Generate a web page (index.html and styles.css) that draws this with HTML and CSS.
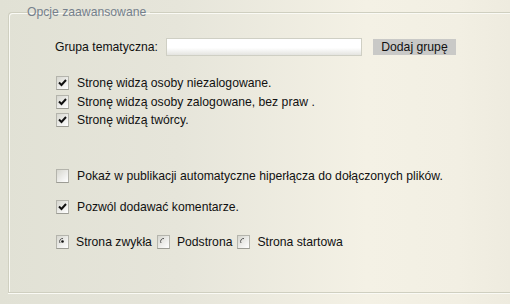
FILE: index.html
```html
<!DOCTYPE html>
<html lang="pl">
<head>
    <meta charset="UTF-8">
    <title>Opcje zaawansowane</title>
    <link rel="stylesheet" href="styles.css">
</head>
<body>

<fieldset class="opcje">
    <legend>Opcje zaawansowane</legend>

    <div class="grupa">
        <label for="grupa">Grupa tematyczna:</label>
        <input type="text" id="grupa" class="pole">
        <button type="button" class="przycisk">Dodaj grupę</button>
    </div>

    <div class="lista">
        <div class="wiersz">
            <span class="box"><svg width="9" height="8" viewBox="0 0 9 8"><path d="M1 3.5 L3.5 6 L8 1" fill="none" stroke="#111" stroke-width="2"/></svg></span>
            <span>Stronę widzą osoby niezalogowane.</span>
        </div>
        <div class="wiersz">
            <span class="box"><svg width="9" height="8" viewBox="0 0 9 8"><path d="M1 3.5 L3.5 6 L8 1" fill="none" stroke="#111" stroke-width="2"/></svg></span>
            <span>Stronę widzą osoby zalogowane, bez praw .</span>
        </div>
        <div class="wiersz">
            <span class="box"><svg width="9" height="8" viewBox="0 0 9 8"><path d="M1 3.5 L3.5 6 L8 1" fill="none" stroke="#111" stroke-width="2"/></svg></span>
            <span>Stronę widzą twórcy.</span>
        </div>
    </div>

    <div class="wiersz odstep">
        <span class="box"></span>
        <span>Pokaż w publikacji automatyczne hiperłącza do dołączonych plików.</span>
    </div>

    <div class="wiersz odstep2">
        <span class="box"><svg width="9" height="8" viewBox="0 0 9 8"><path d="M1 3.5 L3.5 6 L8 1" fill="none" stroke="#111" stroke-width="2"/></svg></span>
        <span>Pozwól dodawać komentarze.</span>
    </div>

    <div class="wiersz radia">
        <span class="box"><svg width="9" height="9" viewBox="0 0 9 9"><path d="M5 1.5 A3 3 0 0 0 2 6" fill="none" stroke="#555" stroke-width="1"/><circle cx="4.5" cy="4.5" r="1.3" fill="#111"/></svg></span>
        <span class="opis">Strona zwykła</span>
        <span class="box"><svg width="9" height="9" viewBox="0 0 9 9"><path d="M5 1.5 A3 3 0 0 0 2 6" fill="none" stroke="#555" stroke-width="1"/></svg></span>
        <span class="opis">Podstrona</span>
        <span class="box"><svg width="9" height="9" viewBox="0 0 9 9"><path d="M5 1.5 A3 3 0 0 0 2 6" fill="none" stroke="#555" stroke-width="1"/></svg></span>
        <span class="opis">Strona startowa</span>
    </div>
</fieldset>

</body>
</html>
```

FILE: styles.css
```css
html, body {
    height: 100%;
}
body {
    margin: 0;
    padding: 5px 0 0 8px;
    box-sizing: border-box;
    overflow: hidden;
    font-family: "Liberation Sans", Arial, sans-serif;
    font-size: 12.2px;
    color: #111;
    background: linear-gradient(to right, #e1e1d5 0%, #e6e5da 35%, #f4f1e5 72%, #f2efe3 90%, #eeebdf 100%);
}
.opcje {
    width: 502px;
    height: 288px;
    box-sizing: border-box;
    margin: 0;
    padding: 18px 0 0 46px;
    border: 1px solid #cfcfc0;
    border-right: none;
    border-radius: 4px 0 0 0;
    box-shadow: inset 1px 1px 0 #fafaf5, 0 1px 0 #fafaf5;
}
.opcje legend {
    margin-left: -28px;
    padding: 0 4px 0 0;
    color: #75808c;
    line-height: 15px;
}
.grupa {
    display: flex;
    align-items: center;
    height: 17px;
}
.grupa label {
    margin-right: 8px;
}
.pole {
    width: 196px;
    height: 18px;
    box-sizing: border-box;
    margin: 0 11px 0 0;
    border: 1px solid #cfcfc4;
    background: linear-gradient(to bottom, #ffffff 0%, #ffffff 55%, #e4e4e0 100%);
}
.przycisk {
    width: 83px;
    height: 16px;
    padding: 0;
    border: none;
    background: #c9c9c7;
    font-family: "Liberation Sans", Arial, sans-serif;
    font-size: 12.2px;
    color: #111;
}
.lista {
    margin-top: 19px;
}
.wiersz {
    display: flex;
    align-items: center;
    height: 18.5px;
    margin-left: 1px;
}
.box {
    width: 13px;
    height: 14px;
    box-sizing: border-box;
    margin-right: 8px;
    border: 1px solid #b4b4ac;
    border-bottom-color: #9c9c94;
    background: linear-gradient(135deg, #d6d6ce 0%, #ededea 55%, #ffffff 100%);
    display: flex;
    align-items: center;
    justify-content: center;
}
.odstep {
    margin-top: 37px;
}
.odstep2 {
    margin-top: 13px;
}
.radia {
    margin-top: 16px;
}
.radia .opis {
    margin-right: 5px;
}
.radia .box {
    margin-right: 7px;
}
```
